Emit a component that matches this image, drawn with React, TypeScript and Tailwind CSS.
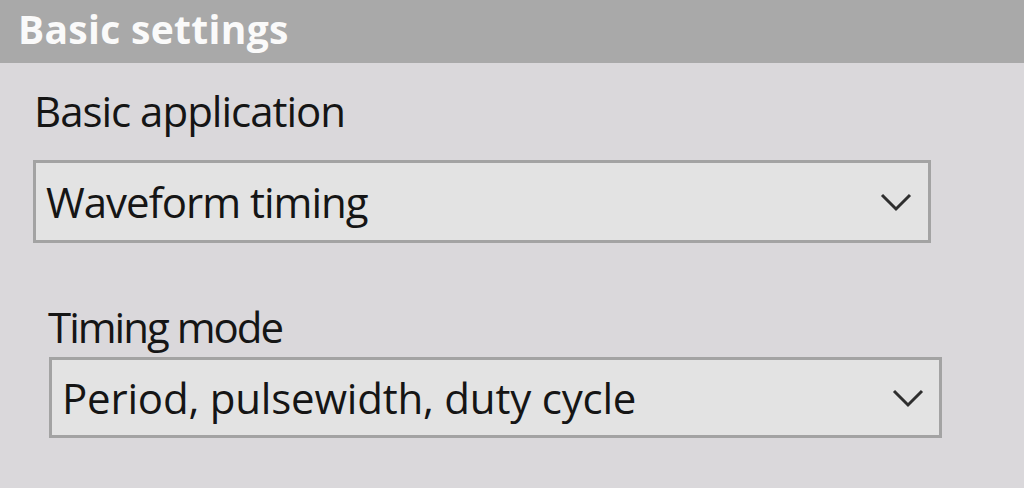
import React from "react";

function Chevron() {
  return (
    <svg width="32" height="20" viewBox="0 0 32 20" fill="none" className="shrink-0">
      <polyline points="2,3 16,17 30,3" stroke="#2e2e2e" strokeWidth="3" />
    </svg>
  );
}

function Dropdown({ value, className }: { value: string; className: string }) {
  return (
    <div
      className={`flex items-center justify-between border-[3px] border-[#a3a3a3] bg-[#e3e3e3] ${className}`}
    >
      <span className="leading-[48px]">{value}</span>
      <Chevron />
    </div>
  );
}

export default function App() {
  return (
    <div
      className="h-[488px] w-[1024px] overflow-hidden bg-[#dad8db] text-[#151515]"
      style={{ fontFamily: '"Open Sans", "Noto Sans", sans-serif' }}
    >
      <div className="h-[63px] bg-[#a9a9a9] pl-[18px]">
        <span className="text-[39px] font-bold leading-[58px] tracking-[0.3px] text-[#fafafa]">
          Basic settings
        </span>
      </div>

      <div className="pl-[33px] text-[42px] tracking-[-1px]">
        <div className="mt-[24px] pl-[1px] leading-[48px]">Basic application</div>
        <Dropdown
          value="Waveform timing"
          className="mt-[25px] h-[83px] w-[898px] pl-[10px] pr-[16px]"
        />

        <div className="ml-[15px] mt-[60px] leading-[48px] tracking-[-2px]">Timing mode</div>
        <Dropdown
          value="Period, pulsewidth, duty cycle"
          className="ml-[16px] mt-[6px] h-[81px] w-[893px] pl-[10px] pr-[15px] tracking-[-0.2px]"
        />
      </div>
    </div>
  );
}
